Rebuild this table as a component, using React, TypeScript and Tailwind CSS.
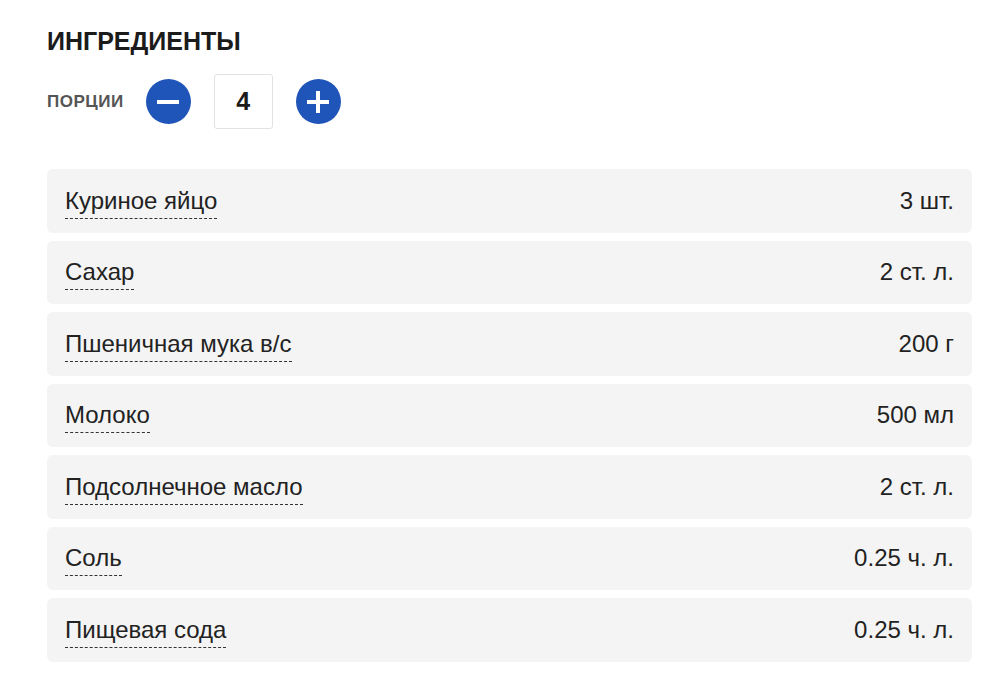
import React, { useState } from 'react';

const items = [
  { name: 'Куриное яйцо', qty: '3 шт.' },
  { name: 'Сахар', qty: '2 ст. л.' },
  { name: 'Пшеничная мука в/с', qty: '200 г' },
  { name: 'Молоко', qty: '500 мл' },
  { name: 'Подсолнечное масло', qty: '2 ст. л.' },
  { name: 'Соль', qty: '0.25 ч. л.' },
  { name: 'Пищевая сода', qty: '0.25 ч. л.' },
];

export default function App() {
  const [portions, setPortions] = useState(4);

  return (
    <div className="min-h-screen bg-white pl-[47px] pr-[14px] pt-[27px] font-['Liberation_Sans',Arial,sans-serif] text-[#222]">
      <h2 className="text-[25px] font-bold leading-[28px] text-[#1b1b1b]">ИНГРЕДИЕНТЫ</h2>

      <div className="mt-[19px] flex items-center">
        <span className="mr-[22px] text-[17px] font-bold tracking-[0.5px] text-[#555]">ПОРЦИИ</span>
        <button
          type="button"
          onClick={() => setPortions(Math.max(1, portions - 1))}
          className="flex h-[45px] w-[45px] items-center justify-center rounded-full bg-[#1f55b8]"
          aria-label="Меньше"
        >
          <span className="block h-[4px] w-[22px] bg-white" />
        </button>
        <div className="mx-[23px] flex h-[55px] w-[59px] items-center justify-center rounded-[3px] border border-[#e2e2e2] text-[25px] font-bold text-[#1b1b1b]">
          {portions}
        </div>
        <button
          type="button"
          onClick={() => setPortions(portions + 1)}
          className="relative flex h-[45px] w-[45px] items-center justify-center rounded-full bg-[#1f55b8]"
          aria-label="Больше"
        >
          <span className="absolute h-[4px] w-[22px] bg-white" />
          <span className="absolute h-[22px] w-[4px] bg-white" />
        </button>
      </div>

      <div className="mt-[40px] flex flex-col gap-[8px]">
        {items.map((it) => (
          <div
            key={it.name}
            className="flex h-[63.5px] items-center justify-between rounded-[6px] bg-[#f4f4f4] px-[18px]"
          >
            <span className="mt-[4px] border-b border-dashed border-[#333] pb-[3px] text-[24px] leading-[28px] text-[#222]">
              {it.name}
            </span>
            <span className="text-[24px] leading-[28px] text-[#222]">{it.qty}</span>
          </div>
        ))}
      </div>
    </div>
  );
}
